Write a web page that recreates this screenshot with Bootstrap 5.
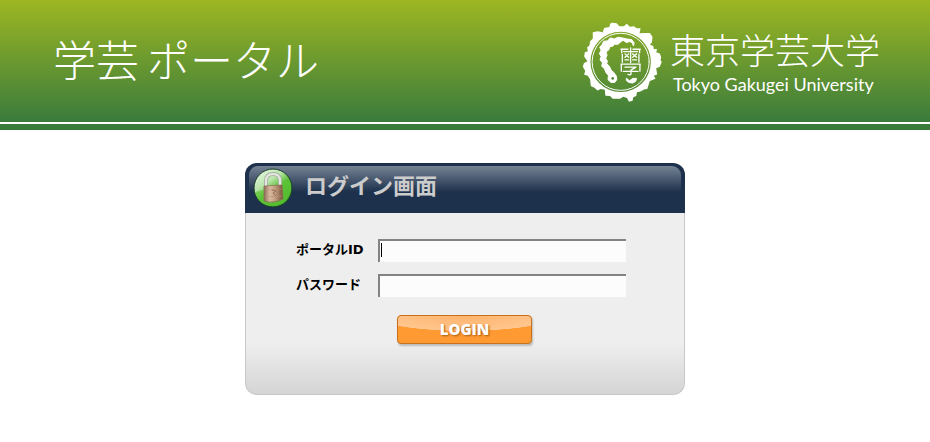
<!DOCTYPE html>
<html lang="ja">
<head>
<meta charset="utf-8">
<meta name="viewport" content="width=device-width, initial-scale=1">
<title>学芸ポータル</title>
<link href="https://cdn.jsdelivr.net/npm/bootstrap@5.3.0/dist/css/bootstrap.min.css" rel="stylesheet">
<style>
body{font-family:"Noto Sans CJK JP","Liberation Sans",sans-serif;background:#fff}
.site-head{background:linear-gradient(#9cb722,#3a7b3c);height:122px;padding:0 50px 0 53px}
.site-rule{height:8px;background:#3a7b3c;border-top:2px solid #fff}
.portal-name{font-size:43px;line-height:60px;font-weight:300;gap:8px;margin-top:28px}
.uni{gap:8px;margin-top:22px}
.uni-ja{font-size:35px;line-height:40px;font-weight:300;margin-top:7px}
.uni-en{font:18px/26px Lato,"Open Sans",sans-serif;padding:2px 0 0 3px}
.login-panel{width:440px;max-width:100%;border-radius:12px;border:1px solid #c8c8c8;border-top:0;background:linear-gradient(#eee 0,#eee 78%,#d5d5d5 100%);margin-top:33px;padding-bottom:50px}
.login-title{margin:0 -1px;height:50px;padding:3px 4px;border-radius:12px 12px 0 0;background:#1d314c}
.login-gloss{height:100%;border-radius:9px 9px 0 0;background:linear-gradient(#758294,#1d314c 26px);padding-left:4px;gap:12px}
.login-gloss h1{font-size:22px;line-height:36px;font-weight:700;color:#ccc}
.login-gloss svg{margin-top:2px}
.login-form{padding:26px 58px 0 50px}
.field-row{margin-bottom:12px}
.field-row label{width:82px;font-size:13px;line-height:20px;font-weight:700;color:#000}
.latin{font-family:"DejaVu Sans",sans-serif}
.field-row input{height:23px;min-width:0;border:0;border-top:2px solid #838383;border-left:2px solid #838383;background:#fcfcfc;padding:0 3px;font-size:13px;outline:0}
.field-row .has-caret{background:linear-gradient(#000,#000) 1px 2px/1px 14px no-repeat #fcfcfc}
.login-btn{width:135px;height:29px;padding:0;border:1px solid #c8711c;border-radius:4px;color:#fff;font:800 15px/27px "Open Sans",sans-serif;background:radial-gradient(ellipse 90px 15px at 50% 0,#ffb36c 0,#ffc68e 97%,transparent 100%),#ff9a33;box-shadow:1px 2px 2px #bbb;text-shadow:1px 1px 2px #a65c12;margin:18px 0 0 101px}
</style>
</head>
<body>
<header>
<div class="site-head d-flex justify-content-between align-items-start text-white">
<div class="portal-name d-flex text-nowrap"><span>学芸</span><span>ポータル</span></div>
<div class="uni d-flex text-nowrap">
<svg width="80" height="80" viewBox="36 37 240 241" fill="none" stroke="#fff" stroke-linecap="round" stroke-linejoin="round" role="img" aria-label="校章">
<path fill="#fff" fill-rule="evenodd" stroke="none" d="M118 52Q119 38 128 39L140 41 148 50 162 50 170 42 180 51 192 50 200 56 212 56 209 71 225 70 240 70 248 82 246 99 240 105 250 109 252 118 262 119 259 128 270 132 274 143 272 153 276 157 270 172 259 176 262 195 252 199 257 208 240 215 235 230 232 239 222 240 212 246 201 249 199 260 190 264 188 274 177 277 171 266 160 262 150 268 128 268 120 260 106 259 104 241 92 239 82 243 73 235 62 230 60 210 53 199 42 196 45 184 38 172 41 161 52 155 42 141 44 128 53 125 51 113 58 108 60 95 68 87 68 68 83 65 98 68 102 55ZM243 157A91 91 0 1 0 61 157A91 91 0 1 0 243 157Z"/>
<circle cx="152" cy="157" r="86" stroke-width="3"/>
<path fill="#fff" stroke-width="3" d="M190 108 187 99 178 96 170 99 159 92 151 98 144 104 134 104 128 110 120 111 116 121 108 127 111 137 107 146 112 155 110 163 118 170 123 181 131 189 139 200 140 211 134 219 123 219 114 211 115 198 108 190 103 178 95 170 97 160 90 151 93 141 88 132 93 122 89 113 96 105 101 95 112 94 121 85 133 88 144 83 157 85 170 88 185 90 192 99Z"/>
<circle cx="128" cy="207" r="4" fill="#55883a" stroke="none"/>
<path stroke-width="4" d="M153 119H174M189 119H211M155 119V130M209 119V130M182 115V159M161 126H203M165 133 176 143M176 133 165 143M188 133 200 143M200 133 188 143M157 135V158M207 135V158M165 151H176M188 151H200M153 164H211M154 164V185M210 164V185M165 173H198L183 182V194Q181 198 174 195M160 186H204"/>
<path fill="#fff" stroke-width="3" d="M170 207 179 214 188 207 200 207 197 216 188 221 177 219 170 214Z"/>
</svg>
<div><div class="uni-ja">東京学芸大学</div><div class="uni-en">Tokyo Gakugei University</div></div>
</div>
</div>
<div class="site-rule"></div>
</header>
<main class="container-fluid p-0">
<section class="login-panel mx-auto">
<div class="login-title"><div class="login-gloss d-flex align-items-start">
<svg width="40" height="40" viewBox="0 0 40 40" aria-hidden="true">
<defs>
<linearGradient id="orb" x1="0" y1="0" x2=".7" y2="1"><stop offset="0" stop-color="#f4fbf1"/><stop offset=".4" stop-color="#b9e5ab"/><stop offset=".6" stop-color="#5cc03a"/><stop offset="1" stop-color="#45aa27"/></linearGradient>
<linearGradient id="brass"><stop offset="0" stop-color="#8a6a54"/><stop offset=".3" stop-color="#d9b99f"/><stop offset=".6" stop-color="#c29b7d"/><stop offset="1" stop-color="#775139"/></linearGradient>
</defs>
<circle cx="20" cy="20" r="19" fill="url(#orb)" stroke="#173b27"/>
<path d="M2 24Q18 21 37 12Q40 31 26 37Q7 41 2 24" fill="#5cc436" opacity=".65"/>
<path d="M13 20V13Q13 6 20 6T27 13V20" fill="none" stroke="#a9b5a6" stroke-width="4"/>
<path d="M13 20V13Q13 6 20 6T27 13V20" fill="none" stroke="#e6e7e1" stroke-width="2"/>
<path d="M11 18 29 17 30 31Q20 36 11 33Z" fill="url(#brass)" stroke="#8a6a54" stroke-width=".7"/>
<path d="M12 22 29 21M12 29 29 28" stroke="#b89278" stroke-width=".6"/><path d="M19 22 23 23 20 25 23 28" fill="none" stroke="#84604a" stroke-width=".7"/>
</svg>
<h1 class="mb-0">ログイン画面</h1>
</div></div>
<form class="login-form">
<div class="field-row d-flex"><label for="uid">ポータル<span class="latin">ID</span></label><input class="has-caret flex-grow-1" id="uid" type="text"></div>
<div class="field-row d-flex"><label for="pwd">パスワード</label><input class="flex-grow-1" id="pwd" type="password"></div>
<button class="login-btn d-block" type="submit">LOGIN</button>
</form>
</section>
</main>
<script src="https://cdn.jsdelivr.net/npm/bootstrap@5.3.0/dist/js/bootstrap.bundle.min.js"></script>
</body>
</html>
